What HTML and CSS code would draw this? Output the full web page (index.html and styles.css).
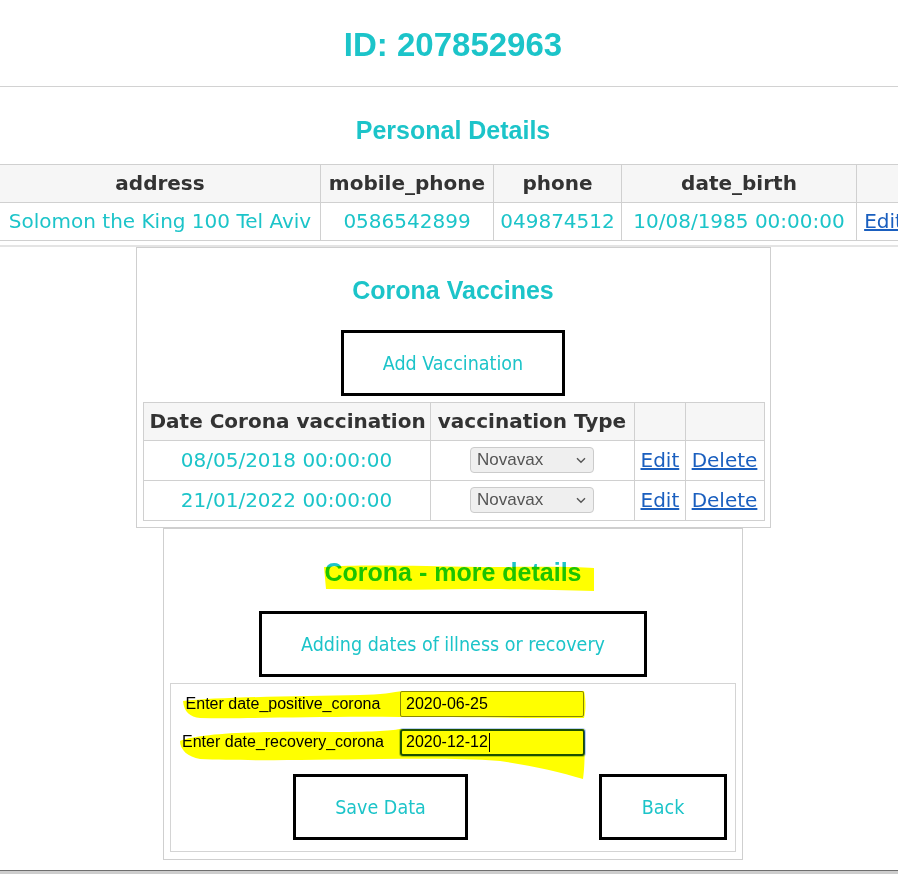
FILE: index.html
```html
<!DOCTYPE html>
<html>
<head>
<meta charset="utf-8">
<title>Person</title>
<link rel="stylesheet" href="styles.css">
</head>
<body>
<div class="page">
  <header class="id-header">
    <h1 class="title">ID: 207852963</h1>
  </header>

  <section class="personal">
    <h2 class="section-title">Personal Details</h2>
    <table class="grid personal-table">
      <colgroup>
        <col class="c-addr"><col class="c-mobile"><col class="c-phone"><col class="c-birth"><col class="c-edit"><col class="c-del">
      </colgroup>
      <thead>
        <tr><th>address</th><th>mobile_phone</th><th>phone</th><th>date_birth</th><th></th><th></th></tr>
      </thead>
      <tbody>
        <tr><td>Solomon the King 100 Tel Aviv</td><td>0586542899</td><td>049874512</td><td>10/08/1985 00:00:00</td><td class="edit-cell"><a class="link" href="#">Edit</a></td><td><a class="link" href="#">Delete</a></td></tr>
      </tbody>
    </table>
  </section>

  <section class="box vaccines">
    <h2 class="section-title">Corona Vaccines</h2>
    <button class="btn btn-add">Add Vaccination</button>
    <table class="grid vac-table">
      <colgroup>
        <col class="v-date"><col class="v-type"><col class="v-edit"><col class="v-del">
      </colgroup>
      <thead>
        <tr><th>Date Corona vaccination</th><th>vaccination Type</th><th></th><th></th></tr>
      </thead>
      <tbody>
        <tr>
          <td>08/05/2018 00:00:00</td>
          <td><span class="select">Novavax<svg class="chev" width="10" height="7" viewBox="0 0 10 7"><path d="M1 1.2 L5 5.2 L9 1.2" fill="none" stroke="#555" stroke-width="1.4"/></svg></span></td>
          <td><a class="link" href="#">Edit</a></td>
          <td><a class="link" href="#">Delete</a></td>
        </tr>
        <tr>
          <td>21/01/2022 00:00:00</td>
          <td><span class="select">Novavax<svg class="chev" width="10" height="7" viewBox="0 0 10 7"><path d="M1 1.2 L5 5.2 L9 1.2" fill="none" stroke="#555" stroke-width="1.4"/></svg></span></td>
          <td><a class="link" href="#">Edit</a></td>
          <td><a class="link" href="#">Delete</a></td>
        </tr>
      </tbody>
    </table>
  </section>

  <section class="box more">
    <h2 class="section-title">Corona - more details</h2>
    <button class="btn btn-dates">Adding dates of illness or recovery</button>
    <form class="form-box">
      <div class="form-grid">
        <label class="lbl">Enter date_positive_corona</label>
        <div class="field">2020-06-25</div>
        <label class="lbl">Enter date_recovery_corona</label>
        <div class="field focused">2020-12-12<span class="caret"></span></div>
      </div>
      <div class="form-actions">
        <button type="button" class="btn btn-save">Save Data</button>
        <button type="button" class="btn btn-back">Back</button>
      </div>
    </form>
  </section>

  <div class="hscroll"></div>

  <svg class="marker" width="906" height="874" viewBox="0 0 906 874">
    <path d="M324 567 C360 564 420 566 480 567 C530 567 570 566 594 568 L594 591 C560 590 520 589 470 589 C420 590 370 590 326 589 Z" fill="#ffff00"/>
    <path d="M183 701 C220 697 300 696 360 695 C380 695 395 692 402 691 L584 691 C586 700 586 710 584 718 C520 718 450 717 400 717 C320 716 250 719 200 718 C190 717 184 712 183 701 Z" fill="#ffff00"/>
    <path d="M180 741 C200 733 260 731 330 732 C370 732 390 731 400 729 L584 729 C585 745 585 765 583 779 C560 772 530 765 500 761 C460 758 420 759 380 759 C300 760 240 761 200 759 C188 757 180 750 180 741 Z" fill="#ffff00"/>
  </svg>
</div>
</body>
</html>
```

FILE: styles.css
```css
html, body {
  margin: 0;
  padding: 0;
  overflow: hidden;
  background: #ffffff;
}

body {
  font-family: "DejaVu Sans", Verdana, sans-serif;
  color: #222;
}

.page {
  position: relative;
  width: 906px;
}

.id-header {
  padding: 26px 0 22px;
  border-bottom: 1px solid #d2d2d2;
  text-align: center;
}

.title {
  margin: 0;
  font: bold 33px/38px "Liberation Sans", Arial, sans-serif;
  color: #1cc4c9;
}

.section-title {
  margin: 0;
  font: bold 25px/29px "Liberation Sans", Arial, sans-serif;
  color: #1cc4c9;
  text-align: center;
}

.personal {
  padding: 29px 0 4px;
  border-bottom: 2px solid #e4e4e4;
}

.grid {
  border-collapse: collapse;
  table-layout: fixed;
  font-size: 20px;
  line-height: 23px;
}

.grid th,
.grid td {
  border: 1px solid #d0d0d0;
  padding: 7px 6px;
  text-align: center;
  white-space: nowrap;
}

.grid th {
  background: #f6f6f6;
  color: #333;
  font-weight: bold;
}

.grid td {
  color: #1cc4c9;
}

.personal-table {
  margin: 19px 0 0 -1px;
  width: 990px;
}

.c-addr { width: 321px; }
.c-mobile { width: 173px; }
.c-phone { width: 128px; }
.c-birth { width: 235px; }
.c-edit { width: 54px; }
.c-del { width: 79px; }

.link {
  color: #1a5fbf;
  text-decoration: underline;
}

.box {
  box-sizing: border-box;
  margin: 0 auto;
  border: 1px solid #cfcfcf;
  background: #fff;
}

.box .section-title {
  margin-top: 28px;
}

.vaccines {
  width: 635px;
  padding: 0 6px 6px;
}

.btn {
  display: block;
  box-sizing: border-box;
  height: 66px;
  border: 3px solid #000;
  background: #fff;
  color: #1cc4c9;
  font-family: "DejaVu Sans Condensed", "DejaVu Sans", sans-serif;
  font-stretch: condensed;
  font-size: 19.5px;
  padding: 0;
  margin: 0;
}

.btn-add {
  width: 224px;
  margin: 25px auto 0;
}

.vac-table {
  width: 621px;
  margin: 6px 0 0 0;
}

.v-date { width: 287px; }
.v-type { width: 204px; }
.v-edit { width: 51px; }
.v-del { width: 79px; }

.vac-table tbody td {
  padding: 6px 6px 7px;
  line-height: 26px;
  height: 26px;
}

.select {
  display: inline-flex;
  align-items: center;
  justify-content: space-between;
  box-sizing: border-box;
  width: 124px;
  height: 26px;
  padding: 0 7px 0 6px;
  border: 1px solid #cbcbcb;
  border-radius: 4px;
  background: #efefef;
  font: 17px/24px "Liberation Sans", Arial, sans-serif;
  color: #545454;
  vertical-align: top;
}

.chev {
  display: block;
}

.more {
  width: 580px;
  padding: 0 6px 7px;
}

.more .section-title {
  margin-top: 29px;
}

.btn-dates {
  width: 388px;
  margin: 24px auto 0;
}

.form-box {
  margin: 6px 0 0;
  border: 1px solid #d4d4d4;
  padding: 7px 0 11px;
}

.form-grid {
  display: grid;
  grid-template-columns: 224px 186px;
  grid-auto-rows: 26px;
  column-gap: 5px;
  row-gap: 12px;
  align-items: center;
}

.lbl {
  text-align: center;
  font: 16px/20px "Liberation Sans", Arial, sans-serif;
  color: #000;
  white-space: nowrap;
}

.field {
  box-sizing: border-box;
  width: 184px;
  height: 26px;
  border: 1px solid #8a8a8a;
  border-radius: 2px;
  padding: 0 5px;
  font: 16px/24px "Liberation Sans", Arial, sans-serif;
  color: #000;
  display: flex;
  align-items: center;
}

.field.focused {
  width: 185px;
  height: 27px;
  border: 2px solid #1d4f95;
  border-radius: 3px;
  box-shadow: 0 0 0 1px #b9d1f2;
  padding: 0 4px;
}

.caret {
  display: inline-block;
  width: 1px;
  height: 19px;
  background: #000;
  margin-left: 1px;
}

.form-actions {
  display: flex;
  margin-top: 19px;
}

.btn-save {
  width: 175px;
  margin-left: 122px;
}

.btn-back {
  width: 128px;
  margin-left: 131px;
}

.hscroll {
  margin-top: 10px;
  height: 3px;
  border-top: 1px solid #6e6e6e;
  background: #cdcdcd;
}

.marker {
  position: absolute;
  left: 0;
  top: 0;
  pointer-events: none;
  mix-blend-mode: multiply;
}
```
